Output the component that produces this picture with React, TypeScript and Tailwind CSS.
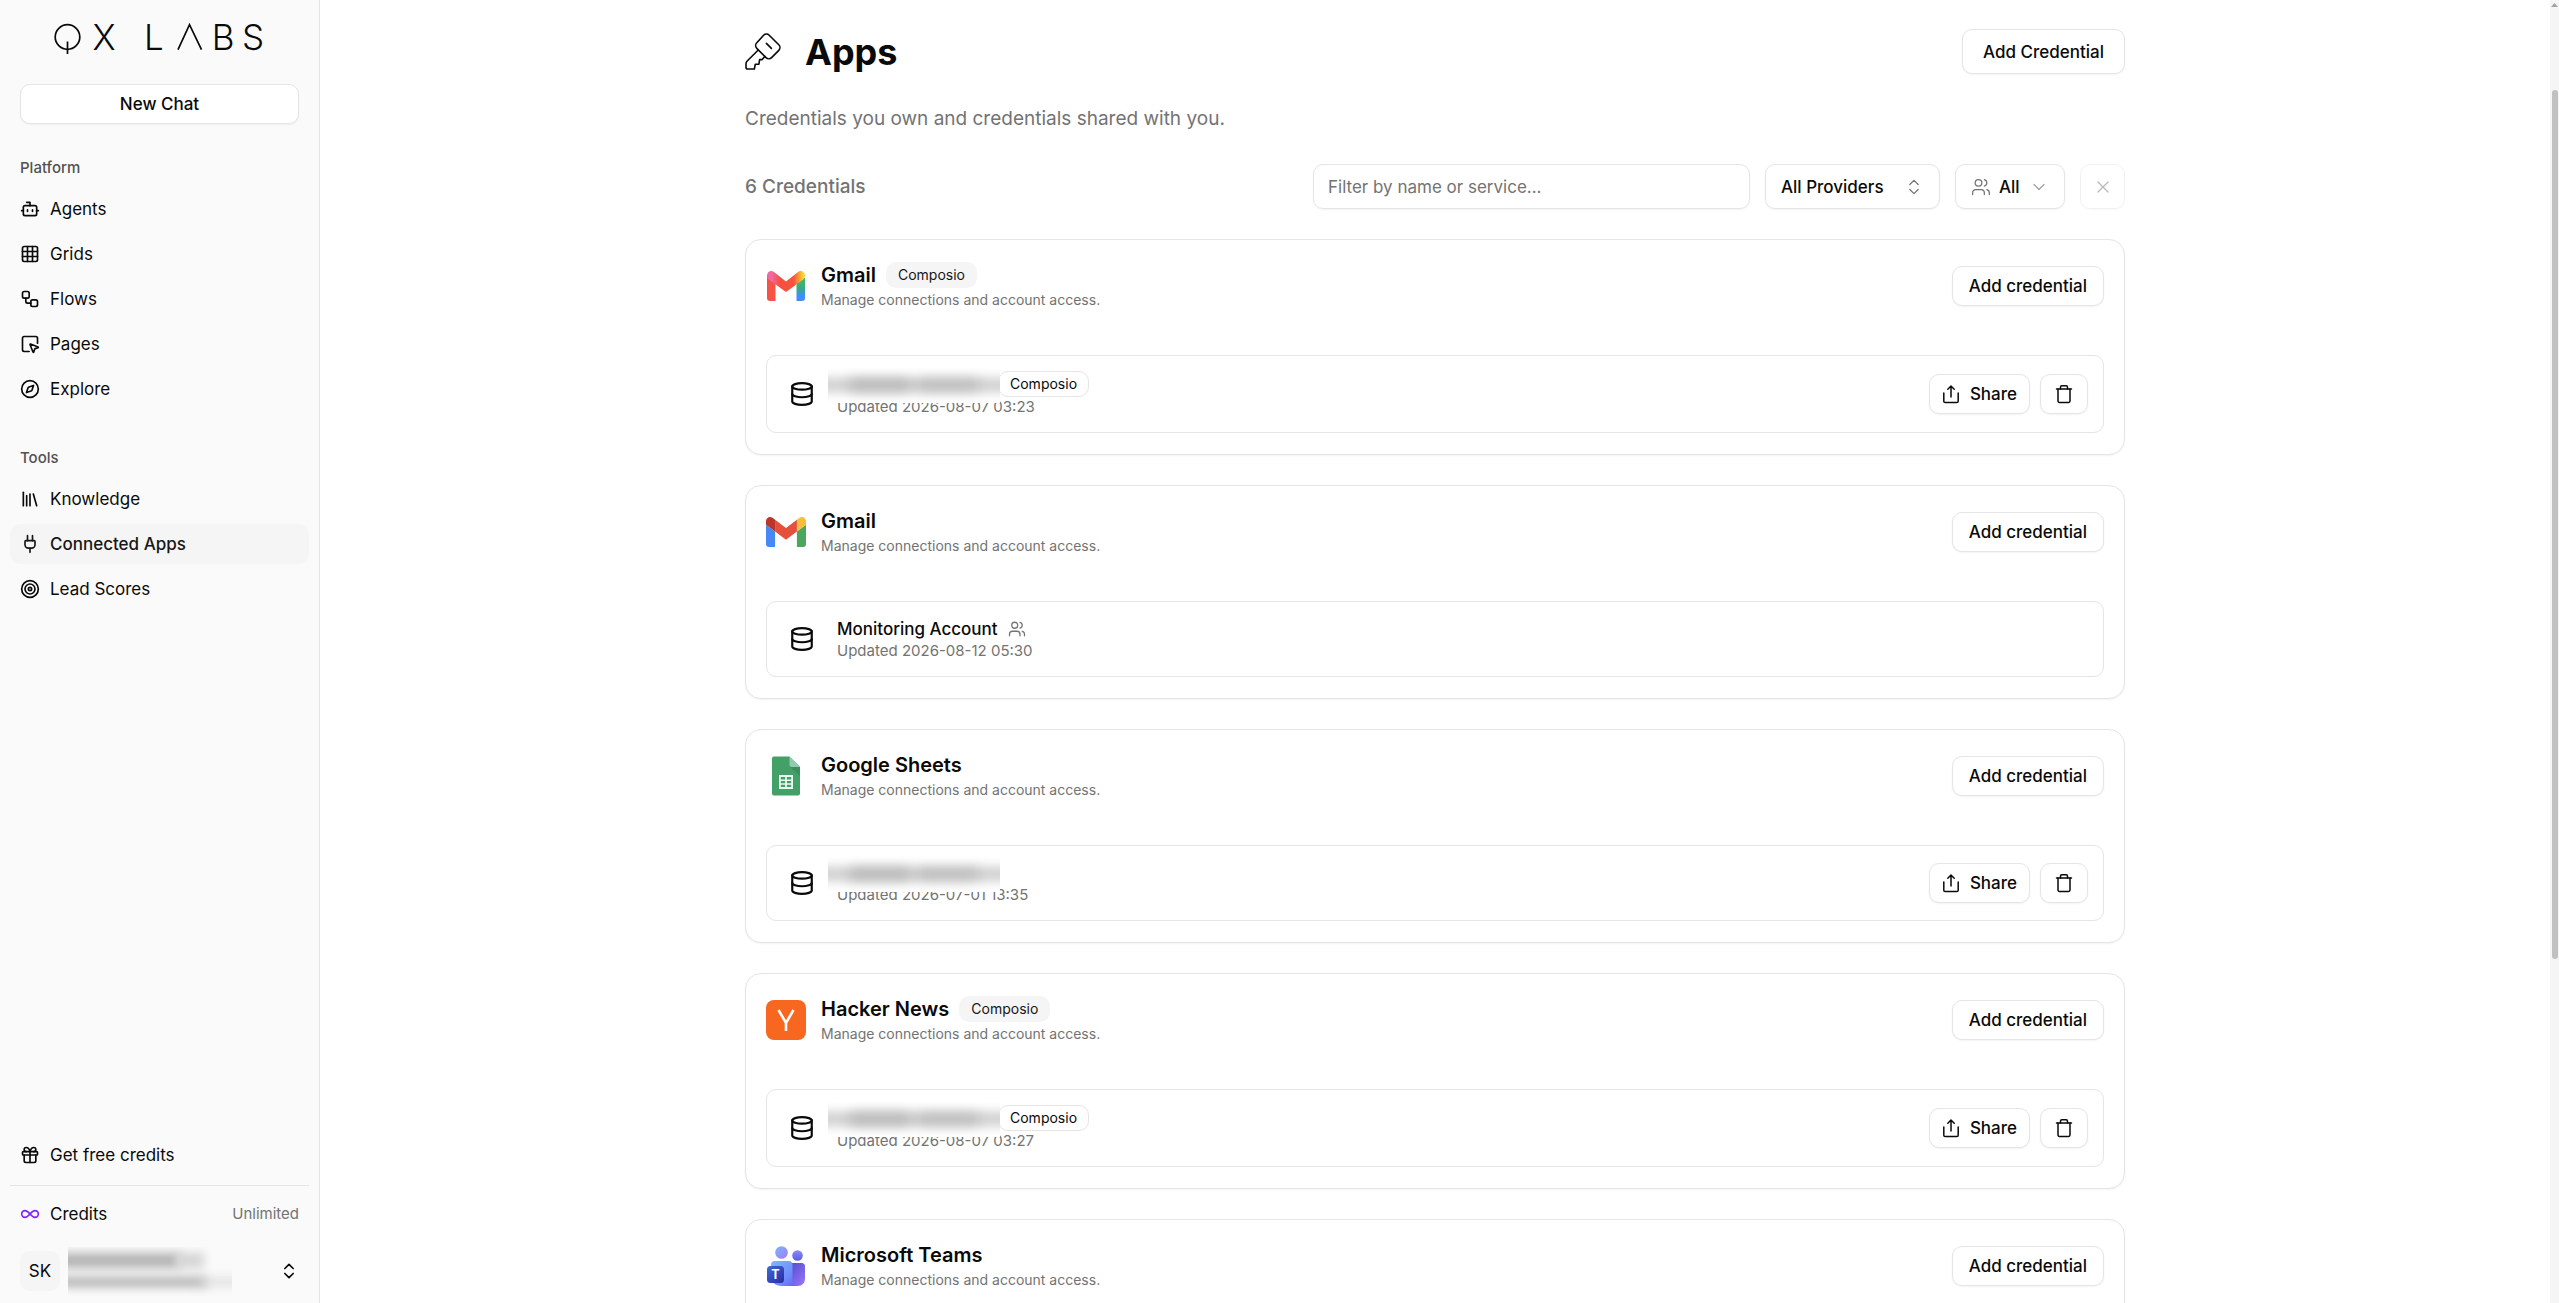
import React from "react";
import {
  Bot,
  ChevronDown,
  ChevronsUpDown,
  Compass,
  Database,
  Gift,
  Grid3x3,
  Infinity as InfinityIcon,
  Library,
  Plug,
  SquareMousePointer,
  Target,
  Users,
  Workflow,
  X,
  type LucideIcon,
} from "lucide-react";

function Wordmark() {
  return (
    <svg viewBox="0 0 212 52" className="h-[52px] w-[212px]" role="img" aria-label="QX LABS">
      <g fill="none" stroke="#0a0a0a" strokeWidth="1.7">
        <circle cx="13.500" cy="25" r="12.300" />
        <path d="M13.500 29.500v12.500" />
        <polyline points="124,37.700 135.500,12.700 147.500,37.700" />
      </g>
      <g fill="#0a0a0a" fontFamily="Inter, sans-serif" fontSize="35" fontWeight="300" textAnchor="middle">
        <text x="50" y="38">X</text>
        <text x="100" y="38">L</text>
        <text x="169" y="38">B</text>
        <text x="199" y="38">S</text>
      </g>
    </svg>
  );
}

function KeyIcon() {
  return (
    <svg viewBox="0 0 36 37" className="h-[37px] w-9 shrink-0" fill="none" stroke="#0a0a0a" strokeWidth="1.6" strokeLinecap="round" strokeLinejoin="round" aria-hidden="true">
      <path d="M18.6 2.2a4 4 0 0 1 5.6 0l9.6 9.6a4 4 0 0 1 0 5.6l-7.2 7.2a4 4 0 0 1-5.6 0l-9.2-9.2a4 4 0 0 1 0-5.6z" />
      <path d="M21.4 10.4l5 5" />
      <path d="M13 17.2L2.2 28a4 4 0 0 0-1.2 2.8v3.4a1.8 1.8 0 0 0 1.8 1.8h6.6l.9-4.8h3.6l.7-4.6h2.6l2.6-3.2" />
    </svg>
  );
}

function ShareIcon() {
  return (
    <svg viewBox="0 0 18 20" className="h-5 w-[18px]" fill="none" stroke="currentColor" strokeWidth="1.5" strokeLinecap="round" strokeLinejoin="round" aria-hidden="true">
      <path d="M1.8 9v8.2a1.3 1.3 0 0 0 1.3 1.3h11.8a1.3 1.3 0 0 0 1.3-1.3V9" />
      <path d="M9 13V2.2M5.8 5.2L9 2l3.2 3.2" />
    </svg>
  );
}

function TrashIcon() {
  return (
    <svg viewBox="0 0 18 20" className="h-5 w-[18px]" fill="none" stroke="currentColor" strokeWidth="1.5" strokeLinecap="round" strokeLinejoin="round" aria-hidden="true">
      <path d="M1.5 5h15" />
      <path d="M5.5 5V3.2a1.4 1.4 0 0 1 1.4-1.4h4.2a1.4 1.4 0 0 1 1.4 1.4V5" />
      <path d="M3 5v12a1.4 1.4 0 0 0 1.4 1.4h9.2A1.4 1.4 0 0 0 15 17V5" />
    </svg>
  );
}

function GmailGradientLogo() {
  return (
    <svg viewBox="0 0 40 40" className="size-10" aria-hidden="true">
      <defs>
        <linearGradient id="gm-right" x1="0" y1="0" x2="0" y2="1">
          <stop offset="0.2" stopColor="#3fb56a" />
          <stop offset="0.5" stopColor="#37a795" />
          <stop offset="0.8" stopColor="#3f8efc" />
        </linearGradient>
        <linearGradient id="gm-v" x1="1" y1="8" x2="39" y2="8" gradientUnits="userSpaceOnUse">
          <stop offset="0" stopColor="#f06aa8" />
          <stop offset="0.14" stopColor="#f0699a" />
          <stop offset="0.34" stopColor="#f5503f" />
          <stop offset="0.7" stopColor="#f6533f" />
          <stop offset="0.84" stopColor="#fb9a35" />
          <stop offset="0.95" stopColor="#fdd835" />
        </linearGradient>
      </defs>
      <path d="M1 9h8.500v26H4a3 3 0 0 1-3-3z" fill="#f65347" />
      <path d="M30.500 12H39v20a3 3 0 0 1-3 3h-5.500z" fill="url(#gm-right)" />
      <path d="M1 9.500C1 5.800 5 3.700 8 6l12 9.400L32 6c3-2.300 7-.2 7 3.500 0 1.600-.6 2.900-1.800 3.900L20 26 2.800 13.400A4.800 4.800 0 0 1 1 9.500z" fill="url(#gm-v)" />
    </svg>
  );
}

function GmailLogo() {
  return (
    <svg viewBox="52 31 88 88" className="size-10" aria-hidden="true">
      <path fill="#4789f4" d="M58 108h14V74L52 59v43c0 3.320 2.690 6 6 6" />
      <path fill="#4ca65d" d="M120 108h14c3.320 0 6-2.690 6-6V59l-20 15" />
      <path fill="#f8bd3a" d="M120 48v26l20-15v-8c0-7.420-8.470-11.650-14.400-7.200" />
      <path fill="#e5503c" d="M72 74V48l24 18 24-18v26L96 92" />
      <path fill="#bb3628" d="M52 51v8l20 15V48l-5.600-4.200c-5.940-4.450-14.400-.22-14.400 7.200" />
    </svg>
  );
}

function SheetsLogo() {
  return (
    <svg viewBox="0 0 40 40" className="size-10" aria-hidden="true">
      <path d="M8 .5h15.500L34 11v26.500a2 2 0 0 1-2 2H8a2 2 0 0 1-2-2v-35a2 2 0 0 1 2-2z" fill="#43a066" />
      <path d="M23.500 10.500L34 20v-9z" fill="#37865a" opacity="0.700" />
      <path d="M23.500.5L34 11h-8.500a2 2 0 0 1-2-2z" fill="#8fcbac" />
      <path d="M13 19h14v14H13z" fill="#eef8f2" />
      <path d="M14.800 21h4.300v2.400h-4.300zM20.900 21h4.300v2.400h-4.300zM14.800 24.900h4.300v2.300h-4.300zM20.900 24.900h4.300v2.300h-4.300zM14.800 28.800h4.300v2.300h-4.300zM20.900 28.800h4.300v2.300h-4.300z" fill="#43a066" />
    </svg>
  );
}

function HackerNewsLogo() {
  return (
    <svg viewBox="0 0 40 40" className="size-10" aria-hidden="true">
      <rect width="40" height="40" rx="8" fill="#f76720" />
      <path d="M12.500 10l7.500 13 7.500-13M20 22.500V31" fill="none" stroke="#fff" strokeWidth="2.600" />
    </svg>
  );
}

function TeamsLogo() {
  return (
    <svg viewBox="0 0 40 40" className="size-10" aria-hidden="true">
      <defs>
        <linearGradient id="tm-head" x1="0" y1="0" x2="1" y2="1">
          <stop offset="0" stopColor="#7fb2fb" />
          <stop offset="1" stopColor="#9c7ff8" />
        </linearGradient>
        <linearGradient id="tm-head2" x1="0" y1="0" x2="0" y2="1">
          <stop offset="0" stopColor="#8c8cf8" />
          <stop offset="1" stopColor="#5a5ce8" />
        </linearGradient>
        <linearGradient id="tm-front" x1="0" y1="0" x2="1" y2="1">
          <stop offset="0" stopColor="#7db9ff" />
          <stop offset="0.600" stopColor="#6f8dfb" />
          <stop offset="1" stopColor="#6a5cf0" />
        </linearGradient>
        <linearGradient id="tm-back" x1="0" y1="0" x2="1" y2="1">
          <stop offset="0" stopColor="#4a45c8" />
          <stop offset="1" stopColor="#9a78fa" />
        </linearGradient>
        <linearGradient id="tm-badge" x1="0" y1="0" x2="1" y2="1">
          <stop offset="0" stopColor="#3f6bd8" />
          <stop offset="1" stopColor="#2b2aa0" />
        </linearGradient>
      </defs>
      <circle cx="15.500" cy="6.500" r="6.300" fill="url(#tm-head)" />
      <circle cx="31.500" cy="9.500" r="5.300" fill="url(#tm-head2)" />
      <path d="M25 17h10.500a3.500 3.500 0 0 1 3.500 3.500V33a7 7 0 0 1-7 7H20z" fill="url(#tm-back)" />
      <path d="M9 15h13.500a4 4 0 0 1 4 4v14c0 3.900 1.500 7 5.500 7H16c-7 0-11-4-11-10V19a4 4 0 0 1 4-4z" fill="url(#tm-front)" />
      <rect x="1" y="20" width="17" height="17" rx="3.500" fill="url(#tm-badge)" />
      <text x="9.500" y="33" textAnchor="middle" fontSize="12.500" fontWeight="700" fontFamily="Inter, sans-serif" fill="#fff">T</text>
    </svg>
  );
}

function NavItem({ icon: Icon, label, active = false }: { icon: LucideIcon; label: string; active?: boolean }) {
  return (
    <a
      href="#"
      className={
        active
          ? "flex h-10 items-center gap-2.5 rounded-[10px] bg-neutral-100 px-2.5 font-medium text-neutral-900"
          : "flex h-10 items-center gap-2.5 rounded-[10px] px-2.5"
      }
    >
      <Icon className="size-5 shrink-0" />
      <span>{label}</span>
    </a>
  );
}

function Sidebar() {
  return (
    <aside className="flex w-80 shrink-0 flex-col border-r border-neutral-200 bg-neutral-50 px-2.5">
      <div className="flex justify-center pt-3">
        <Wordmark />
      </div>
      <button className="mx-2.5 mt-5 h-10 rounded-[10px] border border-neutral-200 bg-white font-medium shadow-xs">
        New Chat
      </button>
      <nav className="flex flex-col gap-[5px] pt-6">
        <h2 className="flex h-10 items-center px-2.5 text-[15px] font-medium text-neutral-600">Platform</h2>
        <div className="-mt-1 flex flex-col gap-[5px]">
          <NavItem icon={Bot} label="Agents" />
          <NavItem icon={Grid3x3} label="Grids" />
          <NavItem icon={Workflow} label="Flows" />
          <NavItem icon={SquareMousePointer} label="Pages" />
          <NavItem icon={Compass} label="Explore" />
        </div>
        <h2 className="mt-6 flex h-10 items-center px-2.5 text-[15px] font-medium text-neutral-600">Tools</h2>
        <div className="-mt-1 flex flex-col gap-[5px]">
          <NavItem icon={Library} label="Knowledge" />
          <NavItem icon={Plug} label="Connected Apps" active />
          <NavItem icon={Target} label="Lead Scores" />
        </div>
      </nav>
      <div className="mt-auto flex flex-col pb-3">
        <NavItem icon={Gift} label="Get free credits" />
        <div className="mt-2.5 border-t border-neutral-200" />
        <a href="#" className="mt-2 flex h-10 items-center gap-2.5 px-2.5">
          <InfinityIcon className="size-5 text-violet-600" />
          <span className="flex-1">Credits</span>
          <span className="text-[15px] text-neutral-500">Unlimited</span>
        </a>
        <button className="relative mt-[17px] flex h-10 items-center px-2.5 text-left" aria-label="Account">
          <span className="flex size-10 items-center justify-center rounded-[10px] bg-neutral-100">SK</span>
          <span className="absolute -top-1 left-[58px] h-14 w-[164px] overflow-hidden" aria-hidden="true">
            <span className="absolute top-1.5 -left-3 h-[15px] w-[124px] bg-neutral-400/80 blur-[5px]" />
            <span className="absolute top-1.5 left-[108px] h-[15px] w-7 bg-neutral-300 blur-[5px]" />
            <span className="absolute top-[30px] -left-3 h-2.5 w-[150px] bg-neutral-400/80 blur-[5px]" />
            <span className="absolute top-[30px] left-[130px] h-2.5 w-12 bg-neutral-300/60 blur-[5px]" />
          </span>
          <ChevronsUpDown className="ml-auto size-5" />
        </button>
      </div>
    </aside>
  );
}

function RedactedName() {
  return (
    <span className="relative h-[26px] w-[151px]" aria-label="Hidden name">
      <span className="absolute -top-1 -left-[9px] z-10 h-9 w-[172px] overflow-hidden bg-white">
        <span className="absolute top-2.5 -left-2.5 h-4 w-[200px] bg-neutral-300 blur-[5px]" />
        <span className="absolute top-[11px] left-[22px] h-3.5 w-[60px] bg-neutral-400/50 blur-[6px]" />
        <span className="absolute top-[11px] left-[90px] h-3.5 w-[60px] bg-neutral-400/40 blur-[6px]" />
      </span>
    </span>
  );
}

type Credential = {
  service: string;
  logo: React.ReactNode;
  composio?: boolean;
  name?: string;
  updated: string;
};

const CREDENTIALS: Credential[] = [
  { service: "Gmail", logo: <GmailGradientLogo />, composio: true, updated: "2026-08-07 03:23" },
  { service: "Gmail", logo: <GmailLogo />, name: "Monitoring Account", updated: "2026-08-12 05:30" },
  { service: "Google Sheets", logo: <SheetsLogo />, updated: "2026-07-01 13:35" },
  { service: "Hacker News", logo: <HackerNewsLogo />, composio: true, updated: "2026-08-07 03:27" },
  { service: "Microsoft Teams", logo: <TeamsLogo />, updated: "2026-07-01 13:30" },
];

function CredentialCard({ service, logo, composio = false, name, updated }: Credential) {
  return (
    <section className="rounded-2xl border border-neutral-200 bg-white px-5 pt-[22px] pb-[21px] shadow-xs">
      <header className="flex items-center gap-[15px]">
        {logo}
        <div className="flex-1">
          <div className="flex h-[26px] items-center gap-2.5">
            <h2 className="text-xl font-semibold">{service}</h2>
            {composio && (
              <span className="flex h-[26px] items-center rounded-[10px] bg-neutral-100 px-3 text-sm text-neutral-900">Composio</span>
            )}
          </div>
          <p className="mt-0.5 text-sm leading-[19px] text-neutral-500">Manage connections and account access.</p>
        </div>
        <button className="h-10 rounded-[10px] border border-neutral-200 bg-white px-4 font-medium shadow-xs">Add credential</button>
      </header>
      <div className="mt-[46px] flex items-center rounded-[10px] border border-neutral-200 py-[15px] pr-[15px] pl-[22px]">
        <Database className="size-[26px] shrink-0" />
        <div className="ml-[22px] flex-1">
          <div className={composio ? "flex h-[26px] items-center gap-2.5" : "flex h-6 items-center gap-2.5"}>
            {name ? (
              <>
                <span className="font-medium">{name}</span>
                <Users className="size-[18px] text-neutral-500" strokeWidth={1.7} />
              </>
            ) : (
              <RedactedName />
            )}
            {composio && (
              <span className="flex h-[26px] items-center rounded-[10px] border border-neutral-200 px-[11px] text-sm">Composio</span>
            )}
          </div>
          <p className="text-[15px] leading-5 text-neutral-500">Updated {updated}</p>
        </div>
        {!name && (
          <div className="-my-2 flex gap-2.5">
            <button className="flex h-10 items-center gap-2.5 rounded-[10px] border border-neutral-200 bg-white px-3 font-medium shadow-xs">
              <ShareIcon />
              Share
            </button>
            <button aria-label="Delete" className="flex h-10 items-center rounded-[10px] border border-neutral-200 bg-white px-3.5 shadow-xs">
              <TrashIcon />
            </button>
          </div>
        )}
      </div>
    </section>
  );
}

export default function App() {
  return (
    <div className="flex h-screen overflow-hidden bg-white font-[Inter,sans-serif] text-[17px] leading-6 text-neutral-950">
      <Sidebar />
      <main className="min-w-0 flex-1 overflow-hidden px-5">
        <div className="mx-auto w-full max-w-[1380px] pt-[29px]">
          <div className="flex items-center">
            <KeyIcon />
            <h1 className="ml-6 text-4xl font-bold">Apps</h1>
            <button className="ml-auto h-[45px] rounded-[10px] border border-neutral-200 bg-white px-5 font-medium shadow-xs">Add Credential</button>
          </div>
          <p className="mt-[30px] text-[19px] leading-[30px] text-neutral-500">Credentials you own and credentials shared with you.</p>
          <div className="mt-[30px] flex items-center gap-[15px]">
            <span className="mr-auto text-[19px] font-medium text-neutral-500">6 Credentials</span>
            <input
              type="text"
              aria-label="Filter credentials"
              placeholder="Filter by name or service..."
              className="h-[45px] w-[437px] rounded-[10px] border border-neutral-200 px-3.5 shadow-xs placeholder:text-neutral-500"
            />
            <div className="relative">
              <select aria-label="Provider" className="h-[45px] w-[175px] appearance-none rounded-[10px] border border-neutral-200 bg-white pl-[15px] font-medium shadow-xs">
                <option>All Providers</option>
              </select>
              <ChevronsUpDown className="pointer-events-none absolute top-[13px] right-4 size-5 text-neutral-500" strokeWidth={1.5} />
            </div>
            <div className="relative">
              <Users className="pointer-events-none absolute top-[13px] left-4 size-5 text-neutral-500" strokeWidth={1.5} />
              <select aria-label="Access" className="h-[45px] w-[110px] appearance-none rounded-[10px] border border-neutral-200 bg-white pl-[43px] font-medium shadow-xs">
                <option>All</option>
              </select>
              <ChevronDown className="pointer-events-none absolute top-[13px] right-4 size-5 text-neutral-400" strokeWidth={1.5} />
            </div>
            <button aria-label="Clear filters" disabled className="flex size-[45px] items-center justify-center rounded-[10px] border border-neutral-200 opacity-50 shadow-xs">
              <X className="size-5 text-neutral-500" strokeWidth={1.5} />
            </button>
          </div>
          <div className="mt-[30px] flex flex-col gap-[30px]">
            {CREDENTIALS.map((c) => (
              <CredentialCard key={c.service + c.updated} {...c} />
            ))}
          </div>
        </div>
      </main>
      <div className="flex w-[9px] shrink-0 flex-col items-center bg-neutral-100" aria-hidden="true">
        <svg viewBox="0 0 7 4" className="mt-[3px] h-1 w-[7px]">
          <path d="M3.500 0L7 4H0z" fill="#a3a3a3" />
        </svg>
        <div className="mt-[83px] h-2/3 w-1.5 rounded-full bg-[#c1c1c1]" />
      </div>
    </div>
  );
}
